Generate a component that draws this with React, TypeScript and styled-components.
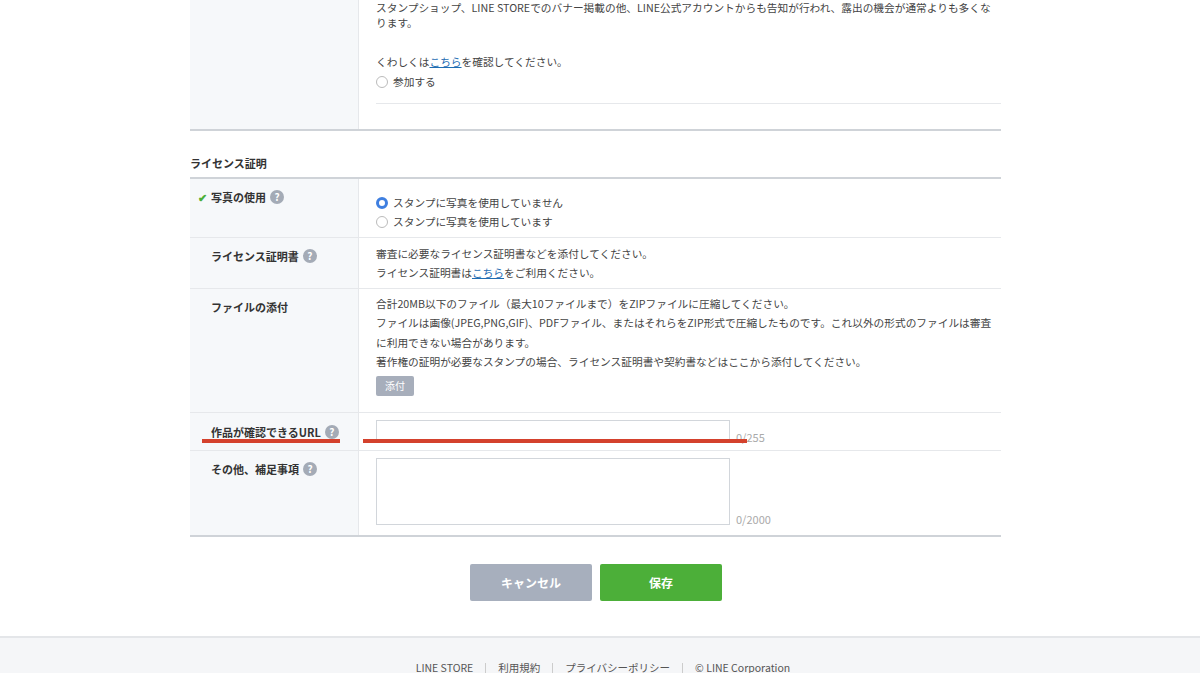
import React from "react";
import styled, { createGlobalStyle } from "styled-components";

const G = createGlobalStyle`
  *{box-sizing:border-box;}
  html,body{margin:0;padding:0;background:#fff;}
  body{font-family:"Noto Sans CJK JP","Liberation Sans",sans-serif;color:#333;font-size:11px;}
`;
const Page = styled.div`position:relative;width:1200px;height:673px;overflow:hidden;background:#fff;`;
const Main = styled.div`width:811px;margin-left:190px;`;
const Row = styled.div<{ h: number; strong?: boolean }>`
  display:grid;grid-template-columns:169px 1fr;height:${p => p.h}px;
  border-bottom:${p => (p.strong ? "2px solid #cfd3d8" : "1px solid #e6e8eb")};
`;
const Label = styled.div<{ pt?: number }>`background:#f6f8fa;border-right:1px solid #e6e8eb;padding:${p => p.pt ?? 10}px 0 0 21px;font-weight:bold;font-size:11px;display:flex;align-items:flex-start;gap:4px;line-height:16px;`;
const Body = styled.div<{ pt?: number }>`padding:${p => p.pt ?? 8}px 0 0 17px;line-height:19.3px;font-size:10.7px;color:#444;`;
const Link = styled.a`color:#1f6db3;text-decoration:underline;`;
const Q = styled.span`display:inline-flex;width:14px;height:14px;border-radius:50%;background:#a4abb6;color:#fff;font-size:10px;font-weight:bold;align-items:center;justify-content:center;margin-top:1px;`;
const Radio = styled.span<{ on?: boolean }>`display:inline-block;width:12px;height:12px;border-radius:50%;vertical-align:-2px;margin-right:5px;
  ${p => p.on ? "background:#fff;border:3.5px solid #3f7fe0;" : "border:1px solid #bbb;background:#fff;"}`;
const Para = styled.div`line-height:15px;`;
const Inner = styled.div`border-bottom:1px solid #e6e8eb;margin-top:10px;height:1px;`;
const Title = styled.div`font-weight:bold;font-size:11px;padding:24px 0 6px;border-bottom:2px solid #cfd3d8;line-height:16px;`;
const SmallBtn = styled.span`display:inline-block;background:#a7aebb;color:#fff;padding:0 9px;height:20px;line-height:20px;border-radius:2px;margin-top:5px;font-size:10px;`;
const FieldWrap = styled.div`display:flex;align-items:flex-end;gap:6px;`;
const Box = styled.div<{ h: number }>`width:354px;height:${p => p.h}px;border:1px solid #d2d6db;background:#fff;`;
const Count = styled.span`color:#aaa;font-size:11px;margin-bottom:-4px;`;
const Btns = styled.div`display:flex;justify-content:center;gap:8px;padding:27px 0 35px;margin-left:-8px;`;
const Btn = styled.div<{ green?: boolean }>`width:122px;height:37px;border-radius:2px;background:${p => p.green ? "#4caf39" : "#a7afbd"};color:#fff;font-weight:bold;font-size:12px;display:flex;align-items:center;justify-content:center;`;
const Footer = styled.div`border-top:2px solid #e4e6e9;background:#f5f6f8;height:40px;display:flex;justify-content:center;align-items:flex-start;padding:23px 0 0 6px;gap:12px;color:#555;font-size:10.5px;line-height:14px;`;
const Sep = styled.span`width:1px;height:10px;background:#ccc;margin-top:2px;`;
const Red = styled.div<{ x: number; w: number }>`position:absolute;top:439px;left:${p => p.x}px;width:${p => p.w}px;height:4px;background:#d4412d;`;

export default function App() {
  return (
    <Page>
      <G />
      <Main>
        <Row h={131} strong>
          <Label />
          <Body pt={0}>
            <Para>スタンプショップ、LINE STOREでのバナー掲載の他、LINE公式アカウントからも告知が行われ、露出の機会が通常よりも多くなります。</Para>
            <div style={{ height: 22 }} />
            くわしくは<Link>こちら</Link>を確認してください。
            <div style={{ lineHeight: "22px" }}><Radio />参加する</div>
            <Inner />
          </Body>
        </Row>
        <Title>ライセンス証明</Title>
        <Row h={59}>
          <Label style={{ paddingLeft: 8 }}><span style={{ color: "#4caf39" }}>✔</span> 写真の使用 <Q>?</Q></Label>
          <Body pt={14}>
            <div style={{ lineHeight: "19px" }}><Radio on />スタンプに写真を使用していません</div>
            <div style={{ lineHeight: "19px" }}><Radio />スタンプに写真を使用しています</div>
          </Body>
        </Row>
        <Row h={51}>
          <Label>ライセンス証明書 <Q>?</Q></Label>
          <Body pt={6}>
            審査に必要なライセンス証明書などを添付してください。<br />
            ライセンス証明書は<Link>こちら</Link>をご利用ください。
          </Body>
        </Row>
        <Row h={124}>
          <Label>ファイルの添付</Label>
          <Body pt={5}>
            合計20MB以下のファイル（最大10ファイルまで）をZIPファイルに圧縮してください。<br />
            ファイルは画像(JPEG,PNG,GIF)、PDFファイル、またはそれらをZIP形式で圧縮したものです。これ以外の形式のファイルは審査に利用できない場合があります。<br />
            著作権の証明が必要なスタンプの場合、ライセンス証明書や契約書などはここから添付してください。<br />
            <SmallBtn>添付</SmallBtn>
          </Body>
        </Row>
        <Row h={38}>
          <Label pt={11}>作品が確認できるURL <Q>?</Q></Label>
          <Body pt={7}>
            <FieldWrap><Box h={23} /><Count>0/255</Count></FieldWrap>
          </Body>
        </Row>
        <Row h={86} strong>
          <Label>その他、補足事項 <Q>?</Q></Label>
          <Body pt={7}>
            <FieldWrap><Box h={67} /><Count>0/2000</Count></FieldWrap>
          </Body>
        </Row>
      </Main>
      <Btns><Btn>キャンセル</Btn><Btn green>保存</Btn></Btns>
      <Footer>
        <span>LINE STORE</span><Sep /><span>利用規約</span><Sep /><span>プライバシーポリシー</span><Sep /><span>© LINE Corporation</span>
      </Footer>
      <Red x={202} w={138} />
      <Red x={363} w={384} />
    </Page>
  );
}
